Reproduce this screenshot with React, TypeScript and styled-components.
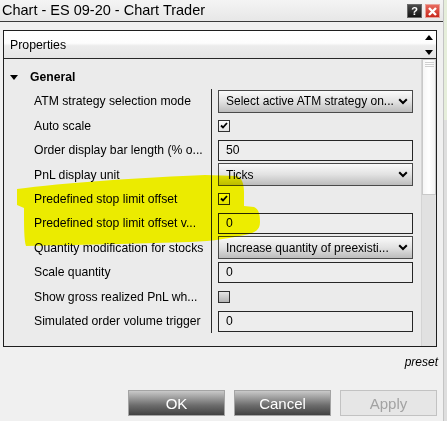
import React from 'react';
import styled, { createGlobalStyle } from 'styled-components';

const GlobalStyle = createGlobalStyle`
  html, body {
    margin: 0;
    padding: 0;
  }
  body {
    font-family: "Liberation Sans", Arial, sans-serif;
    background: linear-gradient(to bottom, #e6eedb 0, #e6eedb 120px, #dedede 120px);
    color: #000;
  }
`;

const Window = styled.div`
  position: relative;
  width: 443px;
  height: 421px;
  background: #f0f0f0;
  border-right: 1px solid #c4c4c4;
  display: flex;
  flex-direction: column;
  overflow: hidden;
`;

const TitleBar = styled.div`
  height: 21px;
  flex: none;
  display: flex;
  align-items: center;
  justify-content: space-between;
  padding: 0 3px 0 2px;
  background: linear-gradient(to bottom, #f4f4f4, #e7e7e7);
  border-bottom: 1px solid #3a3a3a;
`;

const TitleText = styled.span`
  font-size: 14.5px;
  line-height: 21px;
  white-space: nowrap;
`;

const TitleButtons = styled.div`
  display: flex;
  gap: 3px;
  margin-top: 1px;
`;

const HelpButton = styled.div`
  width: 15px;
  height: 14px;
  box-sizing: border-box;
  background: linear-gradient(to bottom, #4a4a4a, #151515);
  border: 1px solid #6a6a6a;
  color: #fff;
  font-size: 11px;
  font-weight: bold;
  line-height: 12px;
  text-align: center;
`;

const CloseButton = styled.div`
  width: 15px;
  height: 14px;
  box-sizing: border-box;
  background: linear-gradient(to bottom, #e86a5e, #c8281c);
  border: 1px solid #e9a29a;
  display: flex;
  align-items: center;
  justify-content: center;
`;

const Body = styled.div`
  flex: 1;
  display: flex;
  flex-direction: column;
  padding: 8px 6px 0 3px;
`;

const Panel = styled.div`
  height: 317px;
  box-sizing: border-box;
  border: 1px solid #1e1e1e;
  display: flex;
  flex-direction: column;
`;

const PanelHeader = styled.div`
  height: 27px;
  flex: none;
  display: flex;
  align-items: center;
  justify-content: space-between;
  padding: 0 0 0 6px;
  background: linear-gradient(to bottom, #ffffff 0%, #fdfdfd 45%, #ececec 55%, #e4e4e4 100%);
  border-bottom: 1px solid #262626;
`;

const HeaderTitle = styled.span`
  font-size: 12.3px;
`;

const HeaderArrows = styled.div`
  width: 15px;
  height: 27px;
  display: flex;
  flex-direction: column;
  align-items: center;
  justify-content: space-between;
  padding: 4px 0 3px;
  box-sizing: border-box;
`;

const GridArea = styled.div`
  flex: 1;
  display: flex;
  background: #ebebeb;
  min-height: 0;
`;

const Grid = styled.div`
  flex: 1;
  padding-top: 6px;
  font-size: 12.2px;
`;

const CategoryRow = styled.div`
  height: 24px;
  display: flex;
  align-items: center;
  gap: 12px;
  padding-left: 6px;
  font-weight: bold;
`;

const Row = styled.div`
  height: 24.44px;
  display: grid;
  grid-template-columns: 207px 1fr;
`;

const Label = styled.div`
  padding-left: 30px;
  display: flex;
  align-items: center;
  white-space: nowrap;
  overflow: hidden;
`;

const ValueCell = styled.div`
  border-left: 1px solid #2a2a2a;
  padding: 0 8px 0 6px;
  display: flex;
  align-items: center;
`;

const Select = styled.div`
  width: 100%;
  height: 23px;
  box-sizing: border-box;
  border: 1px solid #4a4a4a;
  background: linear-gradient(to bottom, #fafafa 0%, #e2e2e2 50%, #bcbcbc 100%);
  display: flex;
  align-items: center;
  justify-content: space-between;
  padding: 0 4px 0 7px;
  font-size: 12px;
  white-space: nowrap;
`;

const TextBox = styled.div`
  width: 100%;
  height: 21px;
  box-sizing: border-box;
  border: 1px solid #262626;
  background: #ededed;
  display: flex;
  align-items: center;
  padding-left: 7px;
`;

const CheckBox = styled.div<{ $checked: boolean }>`
  width: 12px;
  height: 12px;
  box-sizing: border-box;
  border: 1px solid #303030;
  background: ${(p) =>
    p.$checked
      ? 'linear-gradient(to bottom, #fbfbfb, #e2e2e2)'
      : 'linear-gradient(to bottom, #e4e4e4, #b4b4b4)'};
  display: flex;
  align-items: center;
  justify-content: center;
`;

const Scrollbar = styled.div`
  width: 15px;
  flex: none;
  display: flex;
  flex-direction: column;
  background: #e1e1e1;
  border-left: 1px solid #d4d4d4;
  box-sizing: border-box;
`;

const Thumb = styled.div`
  height: 136px;
  box-sizing: border-box;
  background: linear-gradient(to right, #f6f6f6, #ffffff 50%, #f2f2f2);
  border: 1px solid #c9c9c9;
  display: flex;
  flex-direction: column;
  align-items: center;
  gap: 1px;
  padding-top: 2px;
`;

const Grip = styled.div`
  width: 9px;
  height: 1px;
  background: #cfcfcf;
`;

const Preset = styled.div`
  margin-top: 8px;
  text-align: right;
  font-style: italic;
  font-size: 12px;
  line-height: 14px;
  margin-right: -1px;
`;

const ButtonRow = styled.div`
  margin-top: 21px;
  display: flex;
  justify-content: flex-end;
  gap: 9px;
`;

const Button = styled.div<{ $disabled?: boolean }>`
  width: 97px;
  height: 26px;
  box-sizing: border-box;
  display: flex;
  align-items: center;
  justify-content: center;
  font-size: 15px;
  border: 1px solid ${(p) => (p.$disabled ? '#c2c2c2' : '#a4a4a4')};
  color: ${(p) => (p.$disabled ? '#a3a3a3' : '#ffffff')};
  background: ${(p) =>
    p.$disabled
      ? '#e6e6e6'
      : 'linear-gradient(to bottom, #c9c9c9 0%, #a2a2a2 25%, #6c6c6c 60%, #414141 100%)'};
`;

const Highlight = styled.svg`
  position: absolute;
  left: 0;
  top: 0;
  width: 443px;
  height: 421px;
  pointer-events: none;
  mix-blend-mode: multiply;
`;

const Triangle = ({ up }: { up?: boolean }) => (
  <svg width="8" height="5" viewBox="0 0 8 5">
    <path d={up ? 'M0 5 L4 0 L8 5 Z' : 'M0 0 L8 0 L4 5 Z'} fill="#000" />
  </svg>
);

const Chevron = () => (
  <svg width="10" height="7" viewBox="0 0 10 7">
    <path d="M1.2 1.2 L5 5 L8.8 1.2" fill="none" stroke="#000" strokeWidth="2" />
  </svg>
);

const Check = () => (
  <svg width="8" height="7" viewBox="0 0 8 7">
    <path d="M1 3.5 L3 5.5 L7 1" fill="none" stroke="#000" strokeWidth="1.8" />
  </svg>
);

const CloseCross = () => (
  <svg width="9" height="9" viewBox="0 0 9 9">
    <path d="M1 1 L8 8 M8 1 L1 8" stroke="#fff" strokeWidth="2.4" />
  </svg>
);

type Prop =
  | { label: string; kind: 'select'; value: string }
  | { label: string; kind: 'input'; value: string }
  | { label: string; kind: 'check'; checked: boolean };

const properties: Prop[] = [
  { label: 'ATM strategy selection mode', kind: 'select', value: 'Select active ATM strategy on...' },
  { label: 'Auto scale', kind: 'check', checked: true },
  { label: 'Order display bar length (% o...', kind: 'input', value: '50' },
  { label: 'PnL display unit', kind: 'select', value: 'Ticks' },
  { label: 'Predefined stop limit offset', kind: 'check', checked: true },
  { label: 'Predefined stop limit offset v...', kind: 'input', value: '0' },
  { label: 'Quantity modification for stocks', kind: 'select', value: 'Increase quantity of preexisti...' },
  { label: 'Scale quantity', kind: 'input', value: '0' },
  { label: 'Show gross realized PnL wh...', kind: 'check', checked: false },
  { label: 'Simulated order volume trigger', kind: 'input', value: '0' },
];

const renderValue = (p: Prop) => {
  if (p.kind === 'select') {
    return (
      <Select>
        <span>{p.value}</span>
        <Chevron />
      </Select>
    );
  }
  if (p.kind === 'input') {
    return <TextBox>{p.value}</TextBox>;
  }
  return <CheckBox $checked={p.checked}>{p.checked && <Check />}</CheckBox>;
};

export default function App() {
  return (
    <>
      <GlobalStyle />
      <Window>
        <TitleBar>
          <TitleText>Chart - ES 09-20 - Chart Trader</TitleText>
          <TitleButtons>
            <HelpButton>?</HelpButton>
            <CloseButton>
              <CloseCross />
            </CloseButton>
          </TitleButtons>
        </TitleBar>
        <Body>
          <Panel>
            <PanelHeader>
              <HeaderTitle>Properties</HeaderTitle>
              <HeaderArrows>
                <Triangle up />
                <Triangle />
              </HeaderArrows>
            </PanelHeader>
            <GridArea>
              <Grid>
                <CategoryRow>
                  <Triangle />
                  <span>General</span>
                </CategoryRow>
                {properties.map((p) => (
                  <Row key={p.label}>
                    <Label>{p.label}</Label>
                    <ValueCell>{renderValue(p)}</ValueCell>
                  </Row>
                ))}
              </Grid>
              <Scrollbar>
                <Thumb>
                  <Grip />
                  <Grip />
                  <Grip />
                </Thumb>
              </Scrollbar>
            </GridArea>
          </Panel>
          <Preset>preset</Preset>
          <ButtonRow>
            <Button>OK</Button>
            <Button>Cancel</Button>
            <Button $disabled>Apply</Button>
          </ButtonRow>
        </Body>
        {/* marker strokes over the two stop-limit rows */}
        <Highlight viewBox="0 0 443 421">
          <path
            d="M17 189 C 60 183 150 177 205 175 L 237 176 C 242 178 244 184 244 192 L 244 206 L 254 207 C 259 209 260 215 260 222 C 260 230 255 233 245 235 C 230 238 215 241 190 242 L 120 244 L 26 246 C 24 240 24 226 24 208 L 17 205 Z"
            fill="#ffff00"
          />
        </Highlight>
      </Window>
    </>
  );
}
